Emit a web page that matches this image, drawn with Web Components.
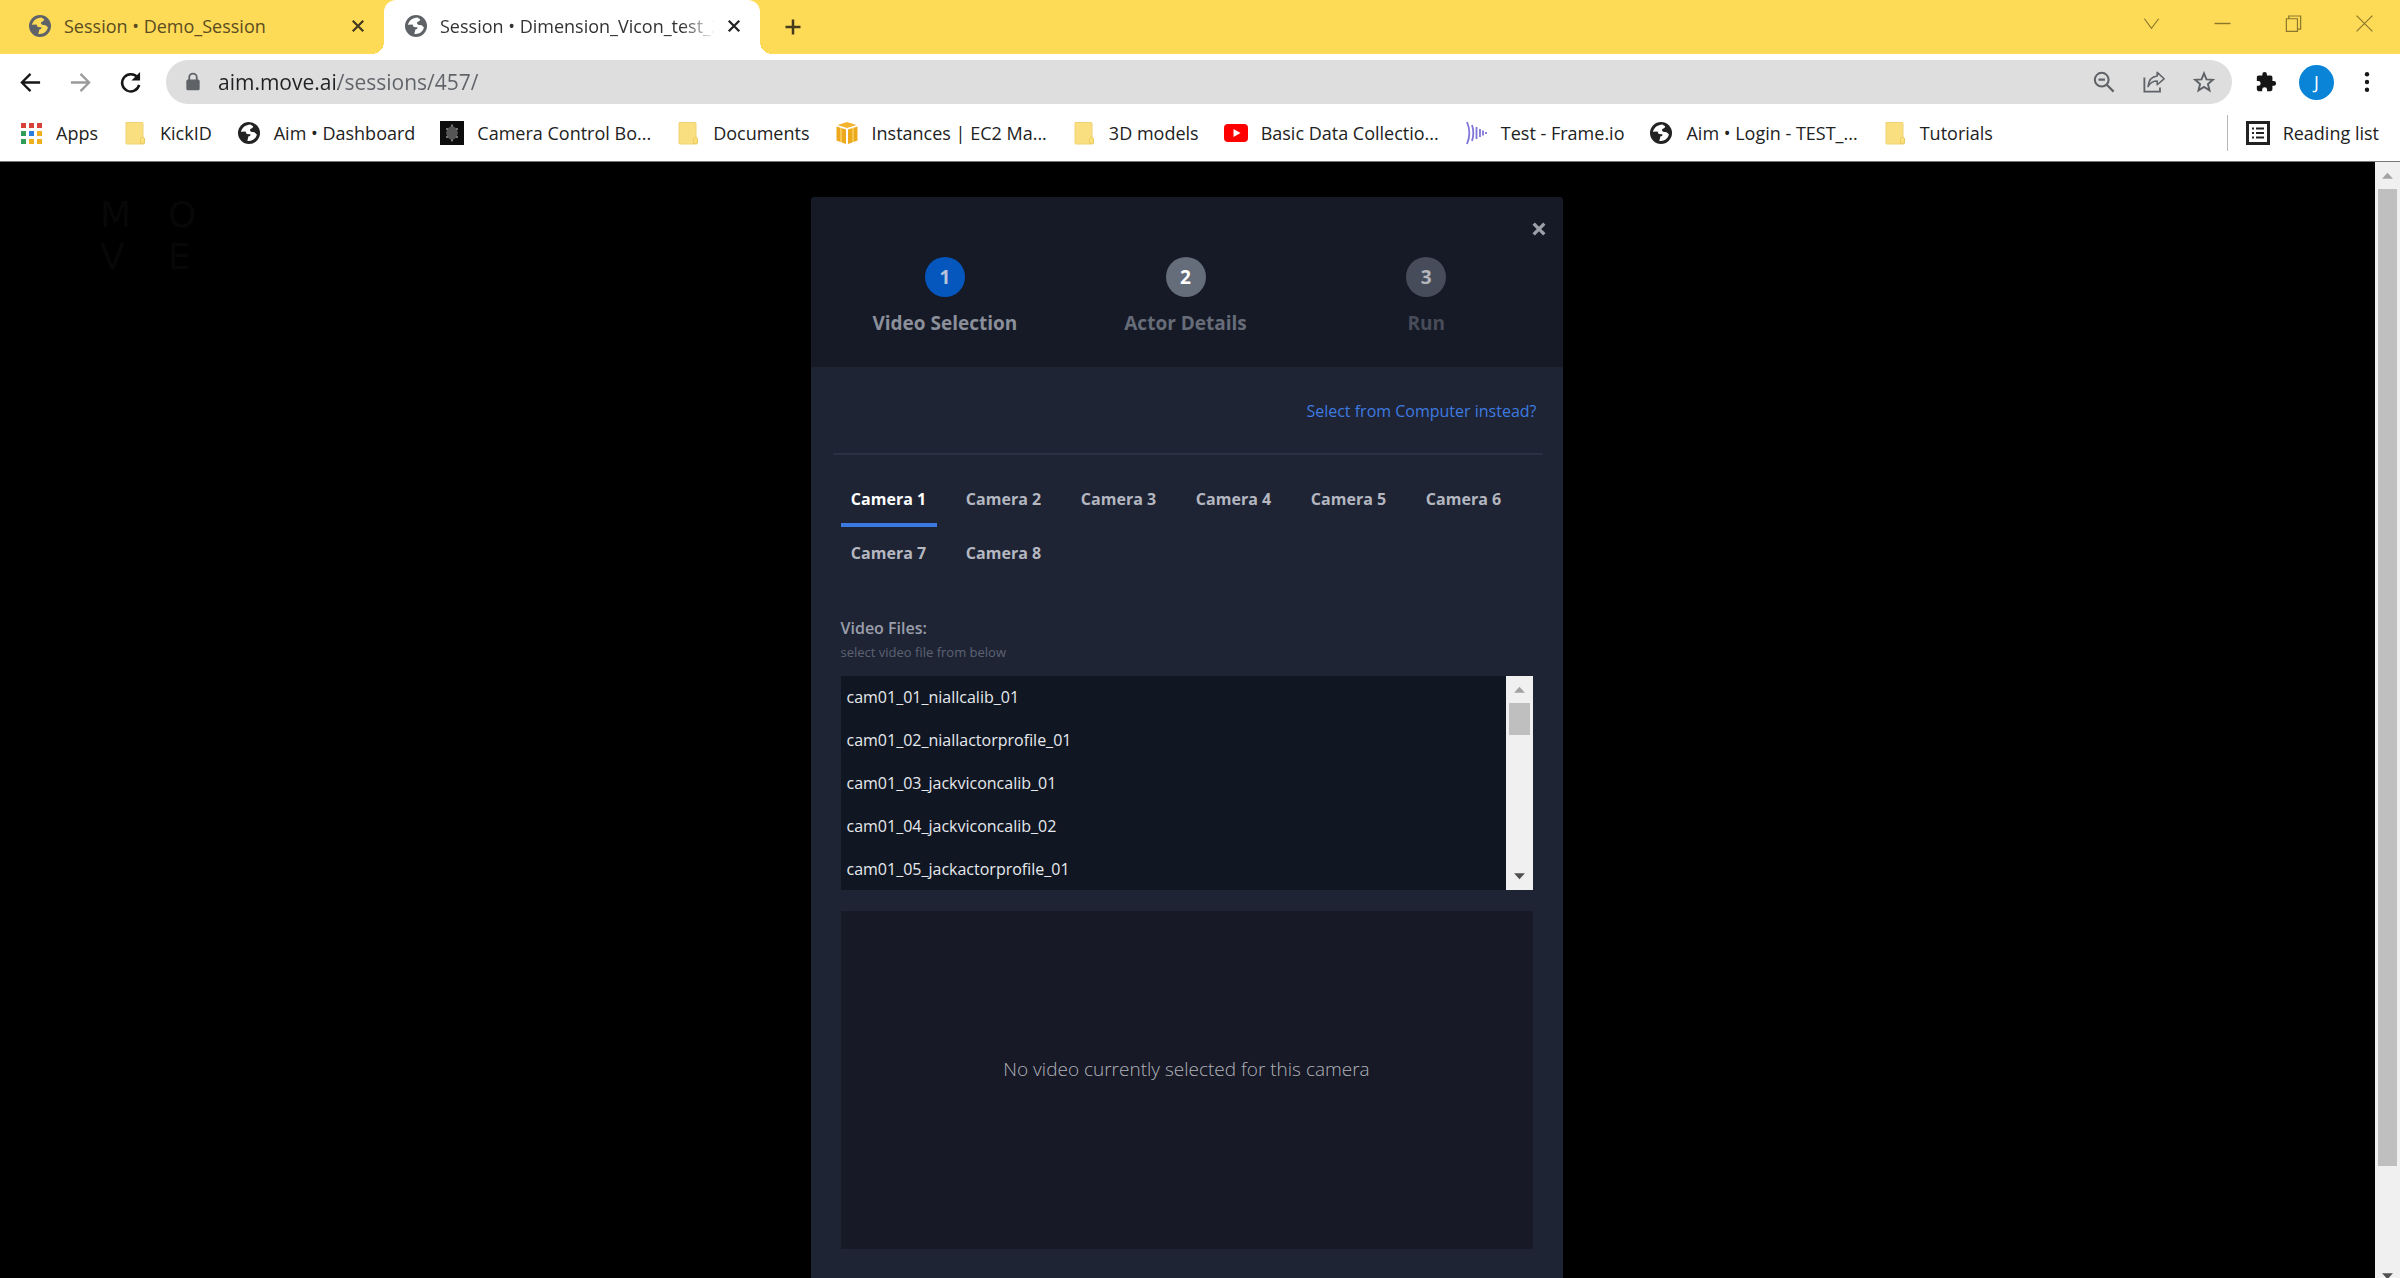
<!DOCTYPE html>
<html lang="en">
<head>
<meta charset="utf-8">
<meta name="viewport" content="width=device-width, initial-scale=1">
<title>Session • Dimension_Vicon_test</title>
<style>
  body {
    margin: 0;
    font-family: "Open Sans", "Noto Sans", sans-serif;
  }
</style>
</head>
<body>
<browser-window></browser-window>

<script>
  const ICONS = {
    globe: `<circle cx="12" cy="12" r="11" fill="currentColor"/><path d="M13.5 3.6c-5 .3-8 2.800-9.700 7.200L8.500 10.600l1.200 2.400 3.600.2c.6 1.200-.3 2-1.800 2.100l-1.200 4.600c4.800.6 8.500-2 9.600-6.400-1.200-1-2-2.400-3.600-2.400-1.800.1-3-.5-3.400-2 .3-1.500 2.800-1.600 3.300-3 .2-1-1.500-1.300-2.700-2.500z" fill="var(--hole, #fff)"/>`,
    close: `<path d="M5 5l14 14M19 5L5 19" fill="none" stroke="currentColor" stroke-width="3"/>`,
    cross: `<path d="M4 4l16 16M20 4L4 20" fill="none" stroke="currentColor" stroke-width="5"/>`,
    plus: `<path d="M12 3v18M3 12h18" fill="none" stroke="currentColor" stroke-width="3"/>`,
    chevron: `<path d="M3 6l9 12 9-12" fill="none" stroke="currentColor" stroke-width="1.500"/>`,
    minimise: `<path d="M2 12h20" fill="none" stroke="currentColor" stroke-width="1.800"/>`,
    restore: `<path d="M3 6h14v16H3zM6 6V2.500h15V19h-4" fill="none" stroke="currentColor" stroke-width="1.500"/>`,
    shut: `<path d="M2 2l20 20M22 2L2 22" fill="none" stroke="currentColor" stroke-width="1.500"/>`,
    back: `<path d="M22 12H3M12 3l-9 9 9 9" fill="none" stroke="currentColor" stroke-width="2.400"/>`,
    forward: `<path d="M2 12h19M12 3l9 9-9 9" fill="none" stroke="currentColor" stroke-width="2.400"/>`,
    reload: `<path d="M19.500 7A9 9 0 1 0 21 14.500" fill="none" stroke="currentColor" stroke-width="2.600"/><path d="M22 1v9h-9z" fill="currentColor"/>`,
    lock: `<rect x="4" y="9" width="16" height="13" rx="2" fill="currentColor"/><path d="M7.500 10V6.500a4.500 4.500 0 0 1 9 0V10" fill="none" stroke="currentColor" stroke-width="2.200"/>`,
    zoom: `<circle cx="9.500" cy="9.500" r="7.500" fill="none" stroke="currentColor" stroke-width="2.200"/><path d="M6 9.500h7M15 15l7.500 7.500" fill="none" stroke="currentColor" stroke-width="2.400"/>`,
    share: `<path d="M1.500 7v15.500h17V18" fill="none" stroke="currentColor" stroke-width="2"/><path d="M15.500 1.500L23 8.500l-7.500 6.500v-4c-4.500 0-7.500 1.600-10 6 .6-6.600 4-11 10-11.600z" fill="none" stroke="currentColor" stroke-width="1.700" stroke-linejoin="round"/>`,
    star: `<path d="M12 2.600l2.700 6.500 7 .5-5.400 4.600 1.700 6.900-6-3.700-6 3.700 1.700-6.900-5.400-4.600 7-.5z" fill="none" stroke="currentColor" stroke-width="2.100"/>`,
    puzzle: `<path d="M20.500 11H19V7c0-1.100-.9-2-2-2h-4V3.500a2.500 2.500 0 0 0-5 0V5H4c-1.100 0-2 .9-2 2v3.800h1.500a2.700 2.700 0 0 1 0 5.400H2V20c0 1.100.9 2 2 2h3.800v-1.500a2.700 2.700 0 0 1 5.400 0V22H17c1.100 0 2-.9 2-2v-4h1.500a2.500 2.500 0 0 0 0-5z" fill="currentColor"/>`,
    dots: `<circle cx="12" cy="3.500" r="2.400" fill="currentColor"/><circle cx="12" cy="12" r="2.400" fill="currentColor"/><circle cx="12" cy="20.500" r="2.400" fill="currentColor"/>`,
    apps: `<g fill="#d8413a"><path d="M2 2h5v5H2zM10 2h5v5h-5zM18 2h5v5h-5z"/></g><path d="M2 10h5v5H2zM2 18h5v5H2z" fill="#2f9e58"/><path d="M10 10h5v5h-5z" fill="#2b7de0"/><path d="M18 10h5v5h-5zM10 18h5v5h-5zM18 18h5v5h-5z" fill="#efb020"/>`,
    folder: `<path d="M3 1.500h16a1 1 0 0 1 1 1V16l1.500 1.500V22a1 1 0 0 1-1 1H4a1 1 0 0 1-1-1z" fill="#fadf80" stroke="#f0d274"/><path d="M17.500 22.500v-5l2.500-1.500 1.500 1.500V22z" fill="#fbe07a" stroke="#e8c85a" stroke-width=".8"/>`,
    camera: `<path d="M0 0h24v24H0z" fill="#0d0d0d"/><path d="M12 4.500l4.500 3 1.500 4.500-1.500 4.500-4.500 3-4.500-3L6 12l1.500-4.500z" fill="#555"/><g fill="#8c8c8c"><circle cx="12" cy="4.500" r="1"/><circle cx="12" cy="19.500" r="1"/><circle cx="7" cy="8" r="1"/><circle cx="17" cy="8" r="1"/><circle cx="7" cy="16" r="1"/><circle cx="17" cy="16" r="1"/></g>`,
    cube: `<path d="M12 1l9.500 3L12 7 2.500 4z" fill="#f3b32c"/><path d="M1.500 5.500L11 8.500V23l-9.500-3.500zM22.500 5.500L13 8.500V23l9.500-3.500z" fill="#eda91e"/><path d="M6 7v14M18 7v14" stroke="#f9cf63" stroke-width="1.500"/>`,
    video: `<rect y="3" width="24" height="18" rx="4" fill="#f00"/><path d="M9.500 8v8l7-4z" fill="#fff"/>`,
    frame: `<path d="M3 1c3 7 3 15 0 22M8 4c2 6 2 10 0 16M12.500 6v12M16 8v8M19 9.500v5M22 11v2" fill="none" stroke="#7f74d8" stroke-width="1.800"/>`,
    reading: `<rect x="1.500" y="1.500" width="21" height="21" fill="none" stroke="currentColor" stroke-width="3"/><path d="M6 7.500h2M6 12h2M6 16.500h2M10 7.500h8M10 12h8M10 16.500h8" stroke="currentColor" stroke-width="2.200"/>`,
    up: `<path d="M2 18L12 7l10 11z" fill="currentColor"/>`,
    down: `<path d="M2 6l10 11L22 6z" fill="currentColor"/>`
  };

  class UiIcon extends HTMLElement {
    connectedCallback() {
      this.attachShadow({ mode: 'open' });
      this.shadowRoot.innerHTML = `
        <style>
          :host { display: block; flex: none; width: var(--icon, 24px); height: var(--icon, 24px); }
          svg { display: block; width: 100%; height: 100%; }
        </style>
        <svg viewBox="0 0 24 24" aria-hidden="true">${ICONS[this.getAttribute('name')]}</svg>
      `;
    }
  }
  customElements.define('ui-icon', UiIcon);

  class BrowserTab extends HTMLElement {
    connectedCallback() {
      this.attachShadow({ mode: 'open' });
      this.shadowRoot.innerHTML = `
        <style>
          :host {
            display: flex;
            align-items: center;
            box-sizing: border-box;
            width: 376px;
            padding: 0 13px 2px 20px;
            color: #5b4c22;
            --hole: #fedb56;
          }
          :host([active]) {
            position: relative;
            background: #fff;
            color: #333;
            border-radius: 12px 12px 0 0;
            --hole: #fff;
          }
          /* feet of the active tab */
          :host([active])::before,
          :host([active])::after {
            content: "";
            position: absolute;
            bottom: 0;
            width: 12px;
            height: 12px;
          }
          :host([active])::before { right: 100%; background: radial-gradient(circle at 0 0, transparent 12px, #fff 12px); }
          :host([active])::after { left: 100%; background: radial-gradient(circle at 100% 0, transparent 12px, #fff 12px); }
          .icon { color: #5f6368; }
          .title {
            flex: 1;
            min-width: 0;
            margin: 0 6px 0 12px;
            overflow: hidden;
            white-space: nowrap;
            font-size: 18px;
          }
          :host([active]) .title {
            -webkit-mask-image: linear-gradient(90deg, #000 88%, transparent);
            mask-image: linear-gradient(90deg, #000 88%, transparent);
          }
          button { border: 0; padding: 4px; background: none; color: #453a1c; --icon: 18px; }
          :host([active]) button { color: #222; }
        </style>
        <ui-icon class="icon" name="globe"></ui-icon>
        <span class="title"><slot></slot></span>
        <button aria-label="Close tab"><ui-icon name="close"></ui-icon></button>
      `;
    }
  }
  customElements.define('browser-tab', BrowserTab);

  class TabStrip extends HTMLElement {
    connectedCallback() {
      this.attachShadow({ mode: 'open' });
      this.shadowRoot.innerHTML = `
        <style>
          :host { display: flex; height: 54px; padding-left: 8px; background: #fedb56; }
          button { border: 0; padding: 0; background: none; color: inherit; }
          .new { margin-left: 23px; color: #453a1c; --icon: 20px; }
          .controls { display: flex; gap: 52px; margin-left: auto; padding: 0 26px 8px 0; color: #8b762c; --icon: 19px; }
        </style>
        <browser-tab>Session • Demo_Session</browser-tab>
        <browser-tab active>Session • Dimension_Vicon_test_2</browser-tab>
        <button class="new" aria-label="New tab"><ui-icon name="plus"></ui-icon></button>
        <div class="controls">
          <button aria-label="Search tabs"><ui-icon name="chevron"></ui-icon></button>
          <button aria-label="Minimise"><ui-icon name="minimise"></ui-icon></button>
          <button aria-label="Restore"><ui-icon name="restore"></ui-icon></button>
          <button aria-label="Close window"><ui-icon name="shut"></ui-icon></button>
        </div>
      `;
    }
  }
  customElements.define('tab-strip', TabStrip);

  class ToolBar extends HTMLElement {
    connectedCallback() {
      this.attachShadow({ mode: 'open' });
      this.shadowRoot.innerHTML = `
        <style>
          :host { display: flex; align-items: center; padding: 6px 22px 0 19px; background: #fff; color: #161616; }
          button { border: 0; padding: 0; background: none; color: inherit; font: inherit; }
          .nav { display: flex; gap: 27px; --icon: 23px; }
          .nav .off { color: #9b9b9b; }
          .address {
            flex: 1;
            display: flex;
            align-items: center;
            height: 44px;
            margin: 0 23px 0 24px;
            padding: 0 17px;
            border-radius: 22px;
            background: #dedede;
            color: #5f6368;
          }
          .lock { --icon: 20px; }
          input {
            flex: 1;
            min-width: 0;
            margin: 0 15px;
            border: 0;
            padding: 0;
            outline: 0;
            font: 21px/32px "Open Sans", "Noto Sans", sans-serif;
            color: #202124;
            /* host in dark, path in grey */
            background: linear-gradient(90deg, #202124 120px, #5f6368 120px);
            -webkit-background-clip: text;
            background-clip: text;
            -webkit-text-fill-color: transparent;
          }
          .actions { display: flex; gap: 28px; --icon: 22px; }
          .extras { display: flex; align-items: center; gap: 22px; --icon: 22px; }
          .avatar {
            width: 35px;
            height: 35px;
            border-radius: 50%;
            background: #0a84d6;
            color: #fff;
            font-size: 18px;
          }
        </style>
        <div class="nav">
          <button aria-label="Back"><ui-icon name="back"></ui-icon></button>
          <button class="off" aria-label="Forward"><ui-icon name="forward"></ui-icon></button>
          <button aria-label="Reload"><ui-icon name="reload"></ui-icon></button>
        </div>
        <div class="address">
          <ui-icon class="lock" name="lock"></ui-icon>
          <input type="text" aria-label="Address" value="aim.move.ai/sessions/457/">
          <div class="actions">
            <button aria-label="Zoom"><ui-icon name="zoom"></ui-icon></button>
            <button aria-label="Share"><ui-icon name="share"></ui-icon></button>
            <button aria-label="Bookmark"><ui-icon name="star"></ui-icon></button>
          </div>
        </div>
        <div class="extras">
          <button aria-label="Extensions"><ui-icon name="puzzle"></ui-icon></button>
          <button class="avatar">J</button>
          <button aria-label="Menu"><ui-icon name="dots"></ui-icon></button>
        </div>
      `;
    }
  }
  customElements.define('tool-bar', ToolBar);

  class BookmarkItem extends HTMLElement {
    connectedCallback() {
      this.attachShadow({ mode: 'open' });
      this.shadowRoot.innerHTML = `
        <style>
          :host { display: block; --icon: 24px; }
          a { display: flex; align-items: center; gap: 13px; color: #222; text-decoration: none; white-space: nowrap; font-size: 18px; }
        </style>
        <a href="#"><ui-icon name="${this.getAttribute('icon')}"></ui-icon><slot></slot></a>
      `;
    }
  }
  customElements.define('bookmark-item', BookmarkItem);

  class BookmarkBar extends HTMLElement {
    connectedCallback() {
      this.attachShadow({ mode: 'open' });
      this.shadowRoot.innerHTML = `
        <style>
          :host {
            display: flex;
            align-items: center;
            gap: 25px;
            height: 57px;
            padding: 0 21px 0 19px;
            background: #fff;
            border-bottom: 1px solid #777;
          }
          .reading { margin-left: auto; padding: 6px 0 6px 18px; border-left: 1px solid #b5b5b5; }
        </style>
        <bookmark-item icon="apps">Apps</bookmark-item>
        <bookmark-item icon="folder">KickID</bookmark-item>
        <bookmark-item icon="globe">Aim • Dashboard</bookmark-item>
        <bookmark-item icon="camera">Camera Control Bo...</bookmark-item>
        <bookmark-item icon="folder">Documents</bookmark-item>
        <bookmark-item icon="cube">Instances | EC2 Ma...</bookmark-item>
        <bookmark-item icon="folder">3D models</bookmark-item>
        <bookmark-item icon="video">Basic Data Collectio...</bookmark-item>
        <bookmark-item icon="frame">Test - Frame.io</bookmark-item>
        <bookmark-item icon="globe">Aim • Login - TEST_...</bookmark-item>
        <bookmark-item icon="folder">Tutorials</bookmark-item>
        <bookmark-item class="reading" icon="reading">Reading list</bookmark-item>
      `;
    }
  }
  customElements.define('bookmark-bar', BookmarkBar);

  class ScrollRail extends HTMLElement {
    connectedCallback() {
      this.attachShadow({ mode: 'open' });
      this.shadowRoot.innerHTML = `
        <style>
          :host { display: flex; flex-direction: column; align-items: center; background: #f0f0f0; --icon: 13px; }
          ui-icon { padding: 7px 0; color: #505050; }
          .off { color: #a3a3a3; }
          .track { flex: 1; min-height: 0; align-self: stretch; padding: 0 3px; }
          .thumb { height: var(--thumb, 20%); background: #bfbfbf; }
        </style>
        <ui-icon class="off" name="up"></ui-icon>
        <div class="track"><div class="thumb"></div></div>
        <ui-icon name="down"></ui-icon>
      `;
    }
  }
  customElements.define('scroll-rail', ScrollRail);

  class StepItem extends HTMLElement {
    connectedCallback() {
      this.attachShadow({ mode: 'open' });
      this.shadowRoot.innerHTML = `
        <style>
          :host {
            flex: 1;
            display: flex;
            flex-direction: column;
            align-items: center;
            gap: 12px;
            color: #676c79;
            font-weight: 700;
            font-size: 19px;
            line-height: 28px;
          }
          .dot {
            width: 40px;
            height: 40px;
            border-radius: 50%;
            background: #656c7a;
            color: #fff;
            line-height: 40px;
            text-align: center;
          }
          :host([current]) { color: #8b8f99; }
          :host([current]) .dot { background: #0556bd; color: #b9c4d8; }
          :host([waiting]) { color: #484c59; }
          :host([waiting]) .dot { background: #474c5b; color: #b4b6bc; }
        </style>
        <span class="dot">${this.getAttribute('number')}</span>
        <slot></slot>
      `;
    }
  }
  customElements.define('step-item', StepItem);

  class CameraTabs extends HTMLElement {
    connectedCallback() {
      const count = Number(this.getAttribute('count'));
      const tabs = Array.from({ length: count }, (_, i) =>
        `<button role="tab" aria-selected="${i === 0}">Camera ${i + 1}</button>`).join('');
      this.attachShadow({ mode: 'open' });
      this.shadowRoot.innerHTML = `
        <style>
          :host { display: block; }
          div { display: flex; flex-wrap: wrap; gap: 2px 19px; }
          button {
            width: 96px;
            border: 0;
            border-bottom: 4px solid transparent;
            padding: 12px 0;
            background: none;
            color: #b4b7c0;
            font: 700 16px/24px "Open Sans", "Noto Sans", sans-serif;
            white-space: nowrap;
          }
          button[aria-selected="true"] { color: #fff; border-color: #3b78e0; }
        </style>
        <div role="tablist">${tabs}</div>
      `;
      this.shadowRoot.addEventListener('click', (e) => {
        if (!e.target.matches('button')) return;
        this.shadowRoot.querySelectorAll('button').forEach((b) => b.setAttribute('aria-selected', b === e.target));
      });
    }
  }
  customElements.define('camera-tabs', CameraTabs);

  class FileList extends HTMLElement {
    connectedCallback() {
      const files = ['cam01_01_niallcalib_01', 'cam01_02_niallactorprofile_01', 'cam01_03_jackviconcalib_01', 'cam01_04_jackviconcalib_02', 'cam01_05_jackactorprofile_01'];
      this.attachShadow({ mode: 'open' });
      this.shadowRoot.innerHTML = `
        <style>
          :host { display: block; }
          h2 { margin: 0; color: #9a9eaa; font: 600 16px/24px "Open Sans", "Noto Sans", sans-serif; }
          p { margin: 0 0 12px; color: #5d6272; font-size: 13px; line-height: 24px; }
          .box { display: flex; height: 214px; background: #111722; }
          ul { flex: 1; display: grid; grid-auto-rows: 1fr; margin: 0; padding: 0; list-style: none; }
          li { display: grid; }
          button {
            border: 0;
            padding: 0 6px;
            background: none;
            color: #e6e9ee;
            font: 16px/24px "Open Sans", "Noto Sans", sans-serif;
            text-align: left;
          }
          scroll-rail { width: 27px; --thumb: 20%; }
        </style>
        <h2>Video Files:</h2>
        <p>select video file from below</p>
        <div class="box">
          <ul>${files.map((f) => `<li><button>${f}</button></li>`).join('')}</ul>
          <scroll-rail></scroll-rail>
        </div>
      `;
    }
  }
  customElements.define('file-list', FileList);

  class SessionModal extends HTMLElement {
    connectedCallback() {
      this.attachShadow({ mode: 'open' });
      this.shadowRoot.innerHTML = `
        <style>
          :host {
            display: flex;
            flex-direction: column;
            width: 752px;
            border-radius: 4px 4px 0 0;
            overflow: hidden;
            background: #1e2434;
          }
          header { padding: 24px 16px 30px 14px; background: #161a27; }
          .top { display: flex; justify-content: flex-end; margin-bottom: 20px; }
          .top button { border: 0; padding: 0; background: none; color: #9da0a8; --icon: 16px; }
          .steps { display: flex; }
          .source { display: flex; justify-content: flex-end; margin: 0 20px 0 22px; padding: 32px 6px 30px; border-bottom: 2px solid #2b3042; }
          .source a { color: #3f7be0; font-size: 16px; line-height: 24px; text-decoration: none; }
          .content { padding: 20px 30px 28px; }
          file-list { margin: 35px 0 21px; }
          .preview {
            display: flex;
            align-items: center;
            justify-content: center;
            box-sizing: border-box;
            height: 338px;
            padding-bottom: 22px;
            background: #171926;
            color: #b0b2ba;
            font-size: 19px;
            font-weight: 300;
          }
        </style>
        <header>
          <div class="top"><button aria-label="Close"><ui-icon name="cross"></ui-icon></button></div>
          <div class="steps">
            <step-item number="1" current>Video Selection</step-item>
            <step-item number="2">Actor Details</step-item>
            <step-item number="3" waiting>Run</step-item>
          </div>
        </header>
        <div class="source"><a href="#">Select from Computer instead?</a></div>
        <div class="content">
          <camera-tabs count="8"></camera-tabs>
          <file-list></file-list>
          <div class="preview">No video currently selected for this camera</div>
        </div>
      `;
    }
  }
  customElements.define('session-modal', SessionModal);

  class BrowserWindow extends HTMLElement {
    connectedCallback() {
      this.attachShadow({ mode: 'open' });
      this.shadowRoot.innerHTML = `
        <style>
          :host { display: flex; flex-direction: column; height: 100vh; overflow: hidden; background: #000; }
          tab-strip, tool-bar, bookmark-bar { flex: none; }
          main { flex: 1; min-height: 0; display: flex; }
          .page {
            flex: 1;
            display: grid;
            grid-template-columns: 1fr auto 1fr;
            padding-right: 2px;
            background: #000;
            overflow: hidden;
          }
          .logo {
            justify-self: start;
            display: grid;
            grid-template-columns: 68px 68px;
            align-content: start;
            margin: 32px 0 0 100px;
            color: #070707;
            font: 36px/42px "DejaVu Sans", sans-serif;
          }
          session-modal { margin-top: 35px; }
          scroll-rail { width: 25px; margin-bottom: -12px; --thumb: 91%; }
        </style>
        <tab-strip></tab-strip>
        <tool-bar></tool-bar>
        <bookmark-bar></bookmark-bar>
        <main>
          <div class="page">
            <div class="logo"><span>M</span><span>O</span><span>V</span><span>E</span></div>
            <session-modal></session-modal>
          </div>
          <scroll-rail></scroll-rail>
        </main>
      `;
    }
  }
  customElements.define('browser-window', BrowserWindow);
</script>
</body>
</html>
